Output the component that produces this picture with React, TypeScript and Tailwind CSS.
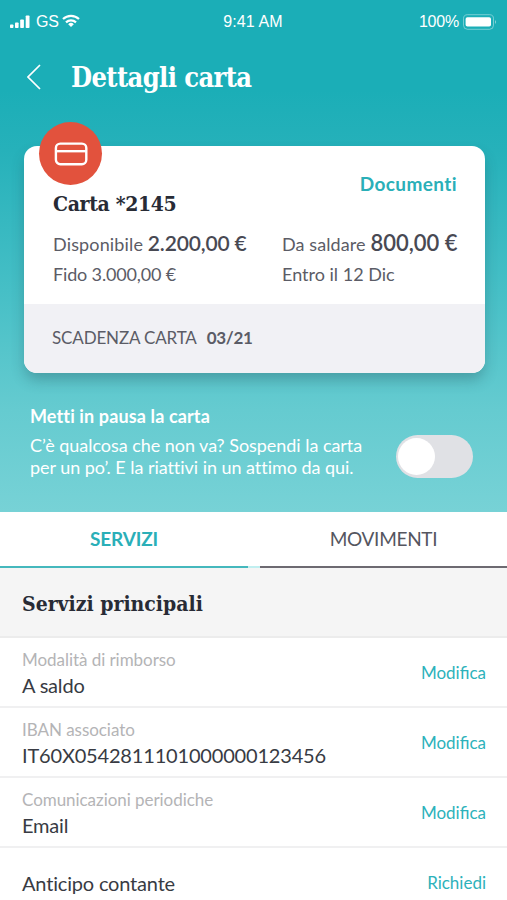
import React, { useState } from "react";

const services = [
  { label: "Modalità di rimborso", value: "A saldo", action: "Modifica" },
  {
    label: "IBAN associato",
    value: "IT60X0542811101000000123456",
    action: "Modifica",
  },
  { label: "Comunicazioni periodiche", value: "Email", action: "Modifica" },
  { label: "", value: "Anticipo contante", action: "Richiedi" },
];

const StatusBar = () => {
  return (
    <div className="grid h-10 grid-cols-3 items-center pl-[9px] pr-[10px] pt-[3px] font-['Liberation_Sans'] text-[16px] text-white">
      <div className="flex items-center">
        <svg width="22" height="14" viewBox="0 0 22 14" fill="currentColor">
          <rect x="1" y="9.5" width="3.4" height="3.5" rx="0.8" />
          <rect x="6" y="7.5" width="3.6" height="5.5" rx="0.8" />
          <rect x="11.2" y="4.5" width="3.7" height="8.5" rx="0.8" />
          <rect x="16.7" y="0.5" width="3.8" height="12.5" rx="0.8" />
        </svg>
        <span className="ml-[5px] tracking-[-0.3px]">GS</span>
        <svg
          className="mb-[2px] ml-[3px]"
          width="18"
          height="14"
          viewBox="0 0 18 14"
          fill="none"
          stroke="currentColor"
          strokeWidth="2.2"
        >
          <path d="M1 5 A11.6 11.6 0 0 1 17 5" />
          <path d="M4 8.4 A7.2 7.2 0 0 1 14 8.4" />
          <path
            d="M9 13 L6.2 10.2 A4 4 0 0 1 11.8 10.2 Z"
            fill="currentColor"
            stroke="none"
          />
        </svg>
      </div>
      <span className="text-center tracking-[0.1px]">9:41 AM</span>
      <div className="flex items-center justify-end">
        <span className="tracking-[-0.2px]">100%</span>
        <svg className="ml-[4px]" width="34" height="16" viewBox="0 0 34 16">
          <rect
            x="0.5"
            y="0.7"
            width="30"
            height="14.6"
            rx="4"
            fill="none"
            stroke="white"
            strokeOpacity="0.4"
          />
          <rect x="2.6" y="3.2" width="25.4" height="9.4" rx="1.8" fill="white" />
          <path d="M32 6 Q34 8 32 10 Z" fill="white" fillOpacity="0.5" />
        </svg>
      </div>
    </div>
  );
};

const CardSummary = () => {
  return (
    <div className="relative ml-6 mt-[33px] h-[227px] w-[461px] rounded-[13px] bg-white text-[18px] text-[#5b5c66] shadow-[0_8px_14px_-1px_rgba(30,70,80,0.32)]">
      <div className="absolute left-[15px] top-[-24px] flex h-[63px] w-[63px] items-center justify-center rounded-full bg-[#e2523d]">
        <svg
          width="34"
          height="24"
          viewBox="0 0 34 24"
          fill="none"
          stroke="white"
          strokeWidth="2.4"
        >
          <rect x="1.9" y="1.6" width="30.4" height="20.6" rx="4.4" />
          <path d="M1.9 9.2h30.4" />
        </svg>
      </div>

      <div className="flex h-[158px] flex-col pl-[29px] pr-7 pt-[23px]">
        <a className="self-end text-[19px] font-bold leading-[30px] tracking-[0.4px] text-[#2aafb8]">
          Documenti
        </a>
        <h2 className="mt-[-9px] font-['DejaVu_Serif_Condensed','DejaVu_Serif'] text-[21px] font-bold leading-[28px] tracking-[-0.35px] text-[#282b35] [font-stretch:condensed]">
          Carta *2145
        </h2>
        <div className="mt-[9px] flex">
          <div className="w-[229px] shrink-0">
            <p className="whitespace-nowrap leading-[32px]">
              <span className="tracking-[0.15px]">Disponibile </span>
              <b className="text-[21px] font-semibold tracking-[-0.15px] text-[#484953]">
                2.200,00 €
              </b>
            </p>
            <p className="leading-[29px] tracking-[-0.15px]">Fido 3.000,00 €</p>
          </div>
          <div>
            <p className="whitespace-nowrap leading-[32px]">
              <span className="tracking-[0.1px]">Da saldare </span>
              <b className="text-[22px] font-semibold text-[#484953]">
                800,00 €
              </b>
            </p>
            <p className="leading-[29px]">Entro il 12 Dic</p>
          </div>
        </div>
      </div>

      <div className="flex h-[69px] items-center rounded-b-[13px] bg-[#f1f1f5] pb-[2px] pl-7 text-[17px]">
        <span className="tracking-[-0.15px]">SCADENZA CARTA</span>
        <b className="ml-[10px] tracking-[-0.3px]">03/21</b>
      </div>
    </div>
  );
};

const PauseCard = () => {
  const [paused, setPaused] = useState(false);

  return (
    <div className="flex items-start justify-between pl-[30px] pr-[34px] pt-[32px] text-[18px] text-white">
      <div>
        <h3 className="font-bold leading-[22px] tracking-[0.13px]">
          Metti in pausa la carta
        </h3>
        <p className="mt-[7px] whitespace-nowrap leading-[22px] tracking-[-0.04px]">
          C’è qualcosa che non va? Sospendi la carta
          <br />
          per un po’. E la riattivi in un attimo da qui.
        </p>
      </div>
      <button
        onClick={() => setPaused(!paused)}
        className={`${
          paused ? "justify-end" : "justify-start"
        } mt-[30px] flex h-[43px] w-[77px] items-center rounded-full bg-[#e0e1e5] px-[2px]`}
      >
        <span className="h-[37px] w-[37px] rounded-full bg-white" />
      </button>
    </div>
  );
};

const Tabs = () => {
  return (
    <div className="flex h-[56px] bg-[#84dfe1]/50 text-[19px]">
      <div className="flex w-[248px] items-center justify-center border-b-2 border-[#45b8bd] bg-white pt-px font-bold tracking-[-0.15px] text-[#2aafb8]">
        SERVIZI
      </div>
      <div className="mb-[2px] w-[12px] bg-white" />
      <div className="flex flex-1 items-center justify-center border-b-2 border-[#6d6a71] bg-white pt-px tracking-[-0.3px] text-[#55565f]">
        MOVIMENTI
      </div>
    </div>
  );
};

const App = () => {
  return (
    <div className="h-[900px] w-[507px] overflow-hidden bg-white font-[Lato,sans-serif] [font-variant-ligatures:none]">
      {/* Header */}
      <div className="h-[512px] bg-[linear-gradient(#1baeb7_0px,#1baeb7_90px,#26b1ba_150px,#46bfc6_290px,#65cbd0_410px,#77d2d6_512px)]">
        <StatusBar />
        <div className="flex h-[73px] items-center pl-[27px] text-white">
          <svg
            width="14"
            height="26"
            viewBox="0 0 14 26"
            fill="none"
            stroke="currentColor"
            strokeWidth="1.7"
          >
            <path d="M13 1L1 13l12 12" />
          </svg>
          <h1 className="ml-[30px] pt-[3px] font-['DejaVu_Serif_Condensed','DejaVu_Serif'] text-[27px] font-bold tracking-[-0.6px] [font-stretch:condensed]">
            Dettagli carta
          </h1>
        </div>
        <CardSummary />
        <PauseCard />
      </div>

      <Tabs />

      {/* Services */}
      <div className="flex h-[70px] items-center border-b-2 border-[#ececec] bg-[#f5f5f5] pl-[22px] pt-[4px]">
        <h2 className="font-['DejaVu_Serif_Condensed','DejaVu_Serif'] text-[21px] font-bold text-[#282b35] [font-stretch:condensed]">
          Servizi principali
        </h2>
      </div>
      {services.map((item) => (
        <div
          key={item.value}
          className="flex h-[70px] items-center justify-between border-b-2 border-[#f0f0f1] pl-[22px] pr-[21px] pt-[2px]"
        >
          <div>
            {item.label && (
              <p className="text-[17px] leading-[24px] tracking-[-0.05px] text-[#b4b4b6]">
                {item.label}
              </p>
            )}
            <p className="text-[20px] leading-[27px] tracking-[-0.18px] text-[#383b43]">
              {item.value}
            </p>
          </div>
          <a className="text-[17px] text-[#2db2bb] [font-variant-ligatures:normal]">
            {item.action}
          </a>
        </div>
      ))}
    </div>
  );
};

export default App;
